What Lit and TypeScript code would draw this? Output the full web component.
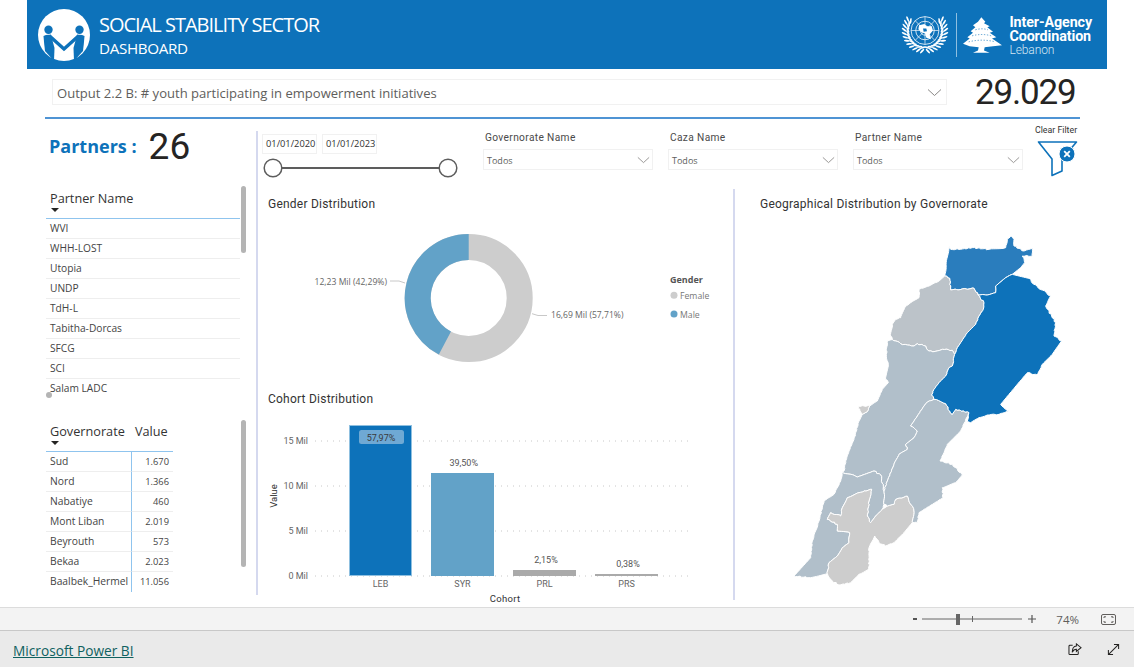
import { LitElement, html, css, svg } from 'lit';
import { customElement } from 'lit/decorators.js';

type Pt = [number, number];

const partners = ['WVI', 'WHH-LOST', 'Utopia', 'UNDP', 'TdH-L', 'Tabitha-Dorcas', 'SFCG', 'SCI', 'Salam LADC'];
const governorates: [string, string][] = [
  ['Sud', '1.670'],
  ['Nord', '1.366'],
  ['Nabatiye', '460'],
  ['Mont Liban', '2.019'],
  ['Beyrouth', '573'],
  ['Bekaa', '2.023'],
  ['Baalbek_Hermel', '11.056'],
];
const filters = ['Governorate Name', 'Caza Name', 'Partner Name'];

// the shared edges come out the same from both sides, the jitter is keyed on the point itself
function rough(points: Pt[]) {
  let d = `M${points[0][0]} ${points[0][1]}`;
  for (let i = 0; i < points.length; i++) {
    const [ax, ay] = points[i];
    const [bx, by] = points[(i + 1) % points.length];
    const steps = Math.max(1, Math.round(Math.hypot(bx - ax, by - ay) / 6));
    for (let s = 1; s <= steps; s++) {
      const t = s / steps;
      const x = ax + (bx - ax) * t;
      const y = ay + (by - ay) * t;
      const off = s === steps ? 0 : Math.sin(x * 12.9 + y * 78.2) * 1.6;
      d += `L${(x + off).toFixed(1)} ${(y - off).toFixed(1)}`;
    }
  }
  return d + 'Z';
}

// map coordinates are 3x page pixels, origin at the top left of the map svg
const regions: { fill: string; pts: Pt[] }[] = [
  {
    fill: '#2a7dbd',
    pts: [[510, 75], [515, 85], [545, 85], [580, 80], [630, 85], [680, 80], [685, 55], [697, 45], [705, 55], [705, 75], [735, 90], [760, 82], [760, 105], [730, 105], [737, 125], [725, 140], [700, 160], [680, 170], [650, 195], [650, 215], [620, 222], [597, 222], [585, 202], [515, 207], [512, 172], [497, 165]],
  },
  {
    fill: '#bcc3c9',
    pts: [[497, 165], [512, 172], [515, 207], [585, 202], [597, 222], [615, 245], [613, 265], [600, 285], [590, 310], [565, 335], [545, 365], [535, 380], [527, 400], [520, 388], [490, 385], [465, 392], [450, 390], [440, 375], [415, 368], [405, 375], [385, 372], [365, 368], [340, 356], [335, 345], [340, 310], [350, 295], [365, 290], [378, 258], [395, 245], [420, 230], [420, 205], [450, 195], [480, 180]],
  },
  {
    fill: '#b1bfca',
    pts: [[325, 360], [340, 356], [365, 368], [385, 372], [405, 375], [415, 368], [440, 375], [450, 390], [465, 392], [490, 385], [520, 388], [527, 400], [520, 435], [510, 440], [500, 465], [480, 485], [465, 505], [458, 522], [465, 535], [445, 543], [435, 555], [415, 585], [395, 615], [415, 630], [405, 650], [380, 670], [385, 685], [360, 700], [345, 730], [325, 780], [315, 810], [305, 762], [285, 750], [235, 768], [190, 753], [195, 750], [200, 720], [210, 690], [225, 655], [240, 600], [250, 580], [265, 572], [272, 555], [295, 540], [310, 505], [328, 485], [320, 475], [328, 430], [322, 400]],
  },
  {
    fill: '#cdcdcd',
    pts: [[238, 555], [272, 555], [265, 572], [250, 580], [243, 570]],
  },
  {
    fill: '#b1bfca',
    pts: [[190, 753], [235, 768], [285, 750], [305, 762], [315, 810], [315, 850], [310, 865], [290, 885], [275, 905], [265, 885], [270, 840], [278, 805], [240, 815], [205, 830], [190, 860], [185, 885], [155, 875], [145, 895], [175, 910], [175, 930], [212, 935], [210, 965], [190, 980], [175, 1005], [150, 1025], [145, 1058], [90, 1070], [45, 1065], [95, 1010], [100, 960], [120, 900], [135, 840], [165, 820], [185, 780]],
  },
  {
    fill: '#cdcdcd',
    pts: [[278, 805], [270, 840], [265, 885], [275, 905], [290, 885], [310, 865], [325, 855], [345, 850], [350, 835], [385, 825], [405, 870], [400, 905], [375, 935], [345, 965], [320, 975], [300, 965], [287, 945], [270, 980], [270, 1045], [240, 1060], [215, 1085], [180, 1092], [160, 1080], [145, 1058], [150, 1025], [175, 1005], [190, 980], [210, 965], [212, 935], [175, 930], [175, 910], [145, 895], [155, 875], [185, 885], [190, 860], [205, 830], [240, 815]],
  },
  {
    fill: '#b1bfca',
    pts: [[445, 543], [465, 535], [500, 548], [512, 570], [520, 580], [530, 565], [570, 575], [545, 630], [505, 670], [495, 695], [483, 720], [520, 730], [550, 762], [530, 785], [490, 800], [492, 830], [420, 875], [415, 905], [400, 905], [405, 870], [385, 825], [350, 835], [345, 850], [325, 855], [315, 850], [315, 810], [325, 780], [345, 730], [360, 700], [385, 685], [380, 670], [405, 650], [415, 630], [395, 615], [415, 585], [435, 555]],
  },
  {
    fill: '#0d72ba',
    pts: [[700, 160], [750, 172], [765, 190], [815, 225], [800, 255], [830, 305], [825, 345], [848, 360], [820, 400], [790, 430], [775, 462], [745, 455], [715, 490], [665, 550], [690, 570], [660, 580], [625, 582], [600, 590], [575, 605], [565, 600], [570, 575], [530, 565], [520, 580], [512, 570], [500, 548], [465, 535], [458, 522], [465, 505], [480, 485], [500, 465], [510, 440], [520, 435], [527, 400], [535, 380], [545, 365], [565, 335], [590, 310], [600, 285], [613, 265], [615, 245], [597, 222], [620, 222], [650, 215], [650, 195], [680, 170]],
  },
];

const chevron = svg`<path d="M1 1.5 L7.5 7.5 L14 1.5" fill="none" stroke="#8a8886" stroke-width="1"/>`;

const bars = [
  { label: 'LEB', color: '#0d72ba', height: 151 },
  { label: 'SYR', color: '#62a2c8', height: 103 },
  { label: 'PRL', color: '#aaaaaa', height: 6 },
  { label: 'PRS', color: '#aaaaaa', height: 2 },
];

@customElement('app-root')
export class AppRoot extends LitElement {
  static styles = css`
    :host {
      display: block;
      width: 1134px;
      height: 667px;
      overflow: hidden;
      background: #fff;
      font-family: 'Open Sans', 'Liberation Sans', sans-serif;
      color: #333;
    }
    .report {
      width: 1080px;
      height: 607px;
      margin-left: 27px;
      display: flex;
      flex-direction: column;
    }

    /* header band */
    .band {
      height: 69px;
      flex: none;
      background: #0d72ba;
      display: flex;
      align-items: center;
      color: #fff;
    }
    .logo {
      margin-left: 10px;
      width: 54px;
      height: 54px;
      flex: none;
    }
    .band-title {
      margin-left: 8px;
      padding-top: 1px;
      line-height: 1;
    }
    .band-title .big {
      font-size: 20px;
      letter-spacing: -1px;
      line-height: 25px;
    }
    .band-title .small {
      font-size: 15.2px;
      letter-spacing: -0.35px;
      line-height: 22px;
    }
    .band-logos {
      margin-left: auto;
      margin-right: 15px;
      display: flex;
      align-items: center;
    }
    .un {
      width: 50px;
      height: 43px;
    }
    .band-rule {
      width: 1px;
      height: 44px;
      margin: 0 6px 0 6px;
      background: #8fbfe0;
    }
    .cedar {
      width: 39px;
      height: 36px;
      margin-right: 7px;
    }
    .iac {
      font-family: 'Roboto', 'Liberation Sans', sans-serif;
      font-weight: 700;
      font-size: 14.3px;
      line-height: 14px;
      letter-spacing: -0.1px;
      padding-top: 2px;
    }
    .iac span {
      display: block;
      font-weight: 300;
      font-size: 12px;
      line-height: 14px;
      color: #d4e6f3;
    }

    /* indicator row */
    .indicator {
      height: 50px;
      flex: none;
      margin: 0 27px 0 18px;
      border-bottom: 2px solid #4f94d4;
      box-sizing: border-box;
      display: flex;
      align-items: flex-start;
    }
    .output {
      flex: none;
      margin: 10px 0 0 7px;
      width: 895px;
      height: 26px;
      box-sizing: border-box;
      border: 1px solid #f1f1f1;
      padding: 0 4px;
      font-size: 13.05px;
      line-height: 27px;
      color: #605e5c;
      display: flex;
      justify-content: space-between;
      align-items: center;
    }
    .output span {
      padding-top: 3px;
    }
    .output svg {
      width: 15px;
      height: 9px;
    }
    .total {
      flex: none;
      margin: 3px 0 0 28px;
      font-family: 'Roboto', 'Liberation Sans', sans-serif;
      font-size: 35px;
      line-height: 42px;
      letter-spacing: -1.2px;
      color: #252423;
    }

    /* three columns */
    .main {
      flex: 1;
      min-height: 0;
      display: grid;
      grid-template-columns: 229px 1fr;
      grid-template-rows: minmax(0, 1fr);
    }
    .left {
      padding: 0 0 0 19px;
      display: flex;
      flex-direction: column;
    }
    .partners {
      height: 54px;
      flex: none;
      display: flex;
      align-items: center;
      padding-left: 3px;
      box-sizing: border-box;
    }
    .partners b {
      font-size: 18px;
      color: #0d72ba;
    }
    .partners span {
      margin-left: 12px;
      font-family: 'Roboto', 'Liberation Sans', sans-serif;
      font-size: 37px;
      letter-spacing: 0.2px;
      color: #252423;
      line-height: 55px;
    }
    .table-wrap {
      position: relative;
      flex: none;
      margin-top: 13px;
      height: 212px;
      overflow: hidden;
      width: 200px;
    }
    .tbl-head {
      width: 194px;
      box-sizing: border-box;
      border-bottom: 1px solid #8fc4ee;
      height: 33px;
      padding: 4px 4px 0;
      font-size: 12.7px;
      line-height: 17px;
      color: #333;
      position: relative;
    }
    .sort {
      position: absolute;
      left: 5px;
      bottom: 6px;
      width: 0;
      height: 0;
      border-left: 4px solid transparent;
      border-right: 4px solid transparent;
      border-top: 4px solid #252423;
    }
    .row {
      width: 194px;
      height: 20px;
      box-sizing: border-box;
      border-bottom: 1px solid #eeeeee;
      padding-left: 4px;
      font-size: 10.2px;
      line-height: 19px;
      color: #444;
      white-space: nowrap;
    }
    .scroll {
      position: absolute;
      top: 0;
      right: 0;
      width: 5px;
      border-radius: 3px;
      background: #b4b4b4;
    }
    .dot {
      position: absolute;
      left: 0;
      bottom: 0;
      width: 6px;
      height: 6px;
      border-radius: 50%;
      background: #b4b4b4;
    }
    .gov-wrap {
      position: relative;
      flex: none;
      margin-top: 22px;
      width: 200px;
      height: 172px;
    }
    .gov-table {
      display: grid;
      grid-template-columns: 86px 41px;
      width: 127px;
    }
    .gov-table > div {
      box-sizing: border-box;
      height: 20px;
      border-bottom: 1px solid #eeeeee;
      font-size: 10.3px;
      line-height: 19px;
      color: #444;
      white-space: nowrap;
      overflow: hidden;
    }
    .gov-table .name {
      padding-left: 4px;
      border-right: 1px solid #8fc4ee;
    }
    .gov-table .val {
      text-align: right;
      padding-right: 4px;
      font-size: 9.3px;
    }
    .gov-table .h {
      height: 32px;
      border-bottom: 1px solid #8fc4ee;
      font-size: 12.7px;
      line-height: 17px;
      padding-top: 3px;
      color: #333;
      position: relative;
      overflow: visible;
    }
    .gov-table .name.h {
      border-right: none;
    }
    .gov-table .h.val {
      font-size: 12.7px;
      text-align: left;
      padding-left: 3px;
      padding-right: 0;
    }
    .gov-table .last {
      border-bottom: none;
    }

    .right {
      display: grid;
      grid-template-columns: 477px 1fr;
      grid-template-rows: 70px minmax(0, 1fr);
      position: relative;
    }
    .rule-v {
      position: absolute;
      top: 12px;
      bottom: 12px;
      left: 0;
      width: 2px;
      background: #d5d9ef;
    }
    .filters {
      grid-column: 1 / 3;
      display: flex;
      padding: 15px 0 0 6px;
    }
    .dates {
      display: flex;
      flex-direction: column;
      width: 200px;
    }
    .date-boxes {
      display: flex;
      gap: 5px;
    }
    .date {
      width: 55px;
      height: 20px;
      box-sizing: border-box;
      border: 1px solid #f1f1f1;
      padding-left: 3px;
      font-size: 9.3px;
      line-height: 18px;
      color: #333;
      white-space: nowrap;
      overflow: hidden;
    }
    .slider {
      width: 196px;
      height: 22px;
      margin-top: 3px;
    }
    .drop-list {
      display: flex;
      gap: 15px;
      margin-left: 21px;
      margin-top: -3px;
    }
    .drop label {
      display: block;
      padding-left: 2px;
      font-family: 'Roboto', 'Liberation Sans', sans-serif;
      font-size: 10.2px;
      line-height: 13px;
      letter-spacing: 0.35px;
      color: #4a4a4a;
    }
    .drop .box {
      margin-top: 5px;
      width: 170px;
      height: 21px;
      box-sizing: border-box;
      border: 1px solid #f1f1f1;
      padding: 0 2px 0 3px;
      font-size: 9px;
      line-height: 21px;
      color: #605e5c;
      display: flex;
      justify-content: space-between;
      align-items: center;
    }
    .drop .box span {
      padding-top: 2px;
    }
    .drop .box svg {
      width: 13px;
      height: 8px;
    }
    .clear {
      margin-left: 12px;
      margin-top: -9px;
      width: 46px;
      font-family: 'Roboto', 'Liberation Sans', sans-serif;
      font-size: 8.8px;
      line-height: 11px;
      color: #333;
      white-space: nowrap;
    }
    .clear svg {
      display: block;
      width: 42px;
      height: 38px;
      margin: 4px 0 0 2px;
    }

    .charts {
      position: relative;
      display: flex;
      flex-direction: column;
      padding-left: 12px;
    }
    .chart-title,
    .map-title {
      font-family: 'Roboto', 'Liberation Sans', sans-serif;
      font-size: 12px;
      line-height: 15px;
      letter-spacing: 0.23px;
      color: #333;
      flex: none;
    }
    .chart-title {
      margin-top: 8px;
    }
    .donut {
      display: block;
      flex: none;
      width: 466px;
      height: 172px;
      margin-left: -12px;
      margin-top: 5px;
    }
    .chart-title.bar-title {
      margin-top: 3px;
    }
    .bar-chart {
      display: block;
      flex: none;
      width: 466px;
      height: 196px;
      margin-left: -12px;
      margin-top: 4px;
    }
    svg text {
      font-family: 'Open Sans', 'Liberation Sans', sans-serif;
    }
    svg text.rt {
      font-family: 'Roboto', 'Liberation Sans', sans-serif;
    }
    .map-pane {
      border-left: 2px solid #d5d9ef;
      margin-bottom: 7px;
      padding-left: 25px;
      box-sizing: border-box;
      display: flex;
      flex-direction: column;
    }
    .map-title {
      margin-top: 8px;
    }
    .map {
      display: block;
      flex: none;
      width: 300px;
      height: 380px;
      margin: 9px 0 0 19px;
    }

    /* viewer chrome */
    .zoombar {
      height: 24px;
      box-sizing: border-box;
      background: #f3f3f3;
      border-top: 1px solid #dcdcdc;
      border-bottom: 1px solid #c8c8c8;
      display: flex;
      align-items: center;
      justify-content: flex-end;
      padding-right: 18px;
      font-size: 11.5px;
      color: #605e5c;
    }
    .zoombar .pct {
      margin: 0 22px 0 14px;
    }
    .zoombar svg {
      display: block;
    }
    .footer {
      height: 36px;
      box-sizing: border-box;
      background: #eaeaea;
      display: flex;
      align-items: center;
      padding: 3px 14px 0 13px;
    }
    .footer a {
      font-size: 13.7px;
      color: #0f6160;
      text-decoration: underline;
    }
    .footer .icons {
      margin-left: auto;
      display: flex;
      gap: 25px;
      margin-top: -2px;
    }
  `;

  private renderLogo() {
    return html`<svg class="logo" viewBox="0 0 54 54">
      <circle cx="27" cy="27" r="26" fill="#fff"/>
      <g fill="#0d72ba">
        <circle cx="11.5" cy="21.7" r="4.2"/>
        <circle cx="42.5" cy="21.7" r="4.2"/>
        <path d="M6.5 28 Q10 26 14 27 L17.5 40 L17 53 L8 43 Q7 35 6.5 28 Z"/>
        <path d="M47.5 28 Q44 26 40 27 L36.5 40 L37 53 L46 43 Q47 35 47.5 28 Z"/>
      </g>
      <path d="M12 27.5 L27 41 L42 27.5" fill="none" stroke="#0d72ba" stroke-width="3.4"/>
    </svg>`;
  }

  private renderUn() {
    const cx = 90;
    const cy = 66;
    const rings = [14, 28, 42].map(
      (r) => svg`<circle cx=${cx} cy=${cy} r=${r} fill="none" stroke="#fff" stroke-width="2.4"/>`,
    );
    const spokes = [0, 45, 90, 135].map(
      (a) => svg`<line x1="48" y1=${cy} x2="132" y2=${cy} stroke="#fff" stroke-width="2" transform="rotate(${a} ${cx} ${cy})"/>`,
    );
    const leaves = [];
    for (const side of [1, -1]) {
      for (let i = 0; i < 12; i++) {
        const a = side * (8 + i * 10.5);
        for (const [r, tilt] of [[52, 65], [63, 35]]) {
          leaves.push(
            svg`<ellipse rx="2.8" ry="9" fill="#fff" transform="rotate(${a} ${cx} ${cy}) translate(${cx} ${cy + r}) rotate(${side * tilt})"/>`,
          );
        }
      }
    }
    return html`<svg class="un" viewBox="15 13 150 130">
      ${rings}${spokes}
      <path d="M72 50 L88 46 L96 54 L110 52 L114 66 L104 78 L108 92 L94 88 L90 74 L80 72 L70 62 Z" fill="#fff"/>
      <path d="M84 60 L94 60 L96 68 L86 70 Z" fill="#0d72ba"/>
      ${leaves}
    </svg>`;
  }

  private renderCedar() {
    return html`<svg class="cedar" viewBox="205 28 117 107" fill="#fff">
      <path d="M260 28 L272 42 L268 46 L285 55 L278 58 L295 72 L285 75 L305 88 L292 92 L322 112 L295 115 L270 118 L268 128 L285 135 L235 135 L250 128 L252 118 L225 115 L205 108 L225 92 L218 88 L235 75 L228 70 L242 58 L235 52 L250 42 Z"/>
      <g stroke="#0d72ba" stroke-width="2" stroke-dasharray="4 5" fill="none">
        <path d="M222 102 Q262 92 302 102"/>
        <path d="M232 84 Q262 76 290 84"/>
        <path d="M242 66 Q262 60 280 66"/>
      </g>
    </svg>`;
  }

  private arc(cx: number, cy: number, r: number, from: number, to: number) {
    const p = (deg: number) => {
      const a = ((deg - 90) * Math.PI) / 180;
      return `${cx + r * Math.cos(a)} ${cy + r * Math.sin(a)}`;
    };
    return `M${p(from)} A${r} ${r} 0 ${to - from > 180 ? 1 : 0} 1 ${p(to)}`;
  }

  private renderDonut() {
    const cx = 212.7;
    const cy = 81;
    return html`<svg class="donut" viewBox="0 0 466 172">
      <circle cx=${cx} cy=${cy} r="51" fill="none" stroke="#cdcdcd" stroke-width="26"/>
      <path d=${this.arc(cx, cy, 51, 207.8, 360)} fill="none" stroke="#62a2c8" stroke-width="26"/>
      <path d="M134 64 H143 L149 66 M276 96.7 L282 98.5 H291" stroke="#c8c8c8" fill="none"/>
      <text x="131" y="68" text-anchor="end" font-size="8.6" fill="#666">12,23 Mil (42,29%)</text>
      <text x="295" y="101" font-size="8.6" fill="#666">16,69 Mil (57,71%)</text>
      <text x="414" y="66" font-size="9" font-weight="700" fill="#555">Gender</text>
      <circle cx="418" cy="78.2" r="3.5" fill="#cdcdcd"/>
      <text x="424" y="81.5" font-size="8.7" fill="#777">Female</text>
      <circle cx="418" cy="97" r="3.5" fill="#62a2c8"/>
      <text x="424" y="100.5" font-size="8.7" fill="#777">Male</text>
    </svg>`;
  }

  private renderBars() {
    // the svg starts at page x 256 and y 410, so the baseline is page y 575
    const base = 165;
    const ticks: [string, number][] = [['15 Mil', 30], ['10 Mil', 75], ['5 Mil', 120], ['0 Mil', 165]];
    const xs = [93, 175, 257, 339];
    return html`<svg class="bar-chart" viewBox="0 0 466 196">
      ${ticks.map(
        ([label, y]) => svg`
          <line x1="59" x2="437" y1=${y} y2=${y} stroke="#c8c8c8" stroke-dasharray="1 5"/>
          <text x="52" y=${y + 3} text-anchor="end" font-size="9" fill="#666" class="rt">${label}</text>`,
      )}
      ${bars.map((b, i) => svg`
        <rect x=${xs[i]} y=${base - b.height} width="63" height=${b.height} fill=${b.color}/>
        <text x=${xs[i] + 31.5} y="175.5" text-anchor="middle" font-size="9" fill="#666" class="rt">${b.label}</text>`)}
      <rect x="93.5" y="14.5" width="62" height="150" fill="none" stroke="#8fc0e0"/>
      <rect x="103" y="19" width="45" height="14" rx="2.5" fill="#6fa9d4"/>
      <text x="125" y="30" text-anchor="middle" font-size="9" fill="#3a3a3a" class="rt">57,97%</text>
      <text x="207.7" y="55" text-anchor="middle" font-size="9" fill="#555" class="rt">39,50%</text>
      <text x="290" y="151.5" text-anchor="middle" font-size="9" fill="#555" class="rt">2,15%</text>
      <text x="372" y="156" text-anchor="middle" font-size="9" fill="#555" class="rt">0,38%</text>
      <text x="249" y="190.7" text-anchor="middle" font-size="9.5" fill="#333" class="rt" letter-spacing="0.3">Cohort</text>
      <text transform="translate(21 85) rotate(-90)" text-anchor="middle" font-size="9.5" fill="#333" class="rt">Value</text>
    </svg>`;
  }

  private renderMap() {
    return html`<svg class="map" viewBox="0 0 900 1140">
      ${regions.map((r) => svg`<path d=${rough(r.pts)} fill=${r.fill} stroke="#fff" stroke-width="3" stroke-linejoin="round"/>`)}
    </svg>`;
  }

  render() {
    return html`
      <div class="report">
        <div class="band">
          ${this.renderLogo()}
          <div class="band-title">
            <div class="big">SOCIAL STABILITY SECTOR</div>
            <div class="small">DASHBOARD</div>
          </div>
          <div class="band-logos">
            ${this.renderUn()}
            <div class="band-rule"></div>
            ${this.renderCedar()}
            <div class="iac">Inter-Agency<br />Coordination<span>Lebanon</span></div>
          </div>
        </div>

        <div class="indicator">
          <div class="output">
            <span>Output 2.2 B: # youth participating in empowerment initiatives</span>
            <svg viewBox="0 0 15 9">${chevron}</svg>
          </div>
          <div class="total">29.029</div>
        </div>

        <div class="main">
          <div class="left">
            <div class="partners"><b>Partners :</b><span>26</span></div>
            <div class="table-wrap">
              <div class="tbl-head">Partner Name<i class="sort"></i></div>
              ${partners.map((p) => html`<div class="row">${p}</div>`)}
              <div class="scroll" style="height: 67px"></div>
              <div class="dot"></div>
            </div>
            <div class="gov-wrap">
              <div class="gov-table">
                <div class="name h">Governorate<i class="sort"></i></div>
                <div class="val h">Value</div>
                ${governorates.map(
                  ([name, val], i) => html`
                    <div class="name ${i === governorates.length - 1 ? 'last' : ''}">${name}</div>
                    <div class="val ${i === governorates.length - 1 ? 'last' : ''}">${val}</div>
                  `,
                )}
              </div>
              <div class="scroll" style="height: 147px"></div>
            </div>
          </div>

          <div class="right">
            <div class="rule-v"></div>
            <div class="filters">
              <div class="dates">
                <div class="date-boxes">
                  <div class="date">01/01/2020</div>
                  <div class="date">01/01/2023</div>
                </div>
                <svg class="slider" viewBox="0 0 196 22">
                  <line x1="12" x2="186" y1="11" y2="11" stroke="#5d5d5d" stroke-width="2"/>
                  <circle cx="11" cy="11" r="8.8" fill="#fff" stroke="#5d5d5d" stroke-width="1.5"/>
                  <circle cx="186" cy="11" r="8.8" fill="#fff" stroke="#5d5d5d" stroke-width="1.5"/>
                </svg>
              </div>
              <div class="drop-list">
                ${filters.map(
                  (f) => html`<div class="drop">
                    <label>${f}</label>
                    <div class="box"><span>Todos</span><svg viewBox="0 0 15 9">${chevron}</svg></div>
                  </div>`,
                )}
              </div>
              <div class="clear">
                Clear Filter
                <svg viewBox="0 0 42 38">
                  <path d="M1.5 2 H39.5 L25 19 V31 L15 35.5 V19 Z" fill="#fff" stroke="#0d72ba" stroke-width="1.6" stroke-linejoin="round"/>
                  <circle cx="30" cy="14" r="8" fill="#0d72ba" stroke="#fff"/>
                  <path d="M27.2 11.2 L32.8 16.8 M32.8 11.2 L27.2 16.8" stroke="#fff" stroke-width="1.8"/>
                </svg>
              </div>
            </div>

            <div class="charts">
              <div class="chart-title">Gender Distribution</div>
              ${this.renderDonut()}
              <div class="chart-title bar-title">Cohort Distribution</div>
              ${this.renderBars()}
            </div>

            <div class="map-pane">
              <div class="map-title">Geographical Distribution by Governorate</div>
              ${this.renderMap()}
            </div>
          </div>
        </div>
      </div>

      <div class="zoombar">
        <svg width="130" height="14" viewBox="0 0 130 14">
          <line x1="1" x2="5" y1="7" y2="7" stroke="#555" stroke-width="2"/>
          <line x1="10" x2="110" y1="7" y2="7" stroke="#666"/>
          <rect x="44" y="2" width="4" height="11" fill="#666"/>
          <line x1="60.5" x2="60.5" y1="4" y2="10" stroke="#666"/>
          <path d="M116 7 H124 M120 3 V11" stroke="#555" stroke-width="1.2"/>
        </svg>
        <span class="pct">74%</span>
        <svg width="15" height="11" viewBox="0 0 15 11" fill="none" stroke="#605e5c">
          <rect x="0.5" y="0.5" width="14" height="10" rx="1.5"/>
          <path d="M3 4 V2.8 H5 M10 2.8 H12 V4 M3 7 V8.2 H5 M10 8.2 H12 V7"/>
        </svg>
      </div>
      <div class="footer">
        <a>Microsoft Power BI</a>
        <div class="icons">
          <svg width="14" height="13" viewBox="0 0 15 14" fill="none" stroke="#252423" stroke-width="1.1">
            <path d="M5 2.5 H2 Q1 2.5 1 3.5 V11.5 Q1 12.5 2 12.5 H10 Q11 12.5 11 11.5 V9"/>
            <path d="M9 1 L14 5 L9 9 V6.8 Q6 6.8 4.5 10 Q4.5 3.6 9 3.2 Z"/>
          </svg>
          <svg width="13" height="13" viewBox="0 0 14 14" fill="none" stroke="#252423" stroke-width="1.1">
            <path d="M1.5 12.5 L12.5 1.5 M7.5 1.5 H12.5 V6.5 M1.5 7.5 V12.5 H6.5"/>
          </svg>
        </div>
      </div>
    `;
  }
}

declare global {
  interface HTMLElementTagNameMap {
    'app-root': AppRoot;
  }
}
